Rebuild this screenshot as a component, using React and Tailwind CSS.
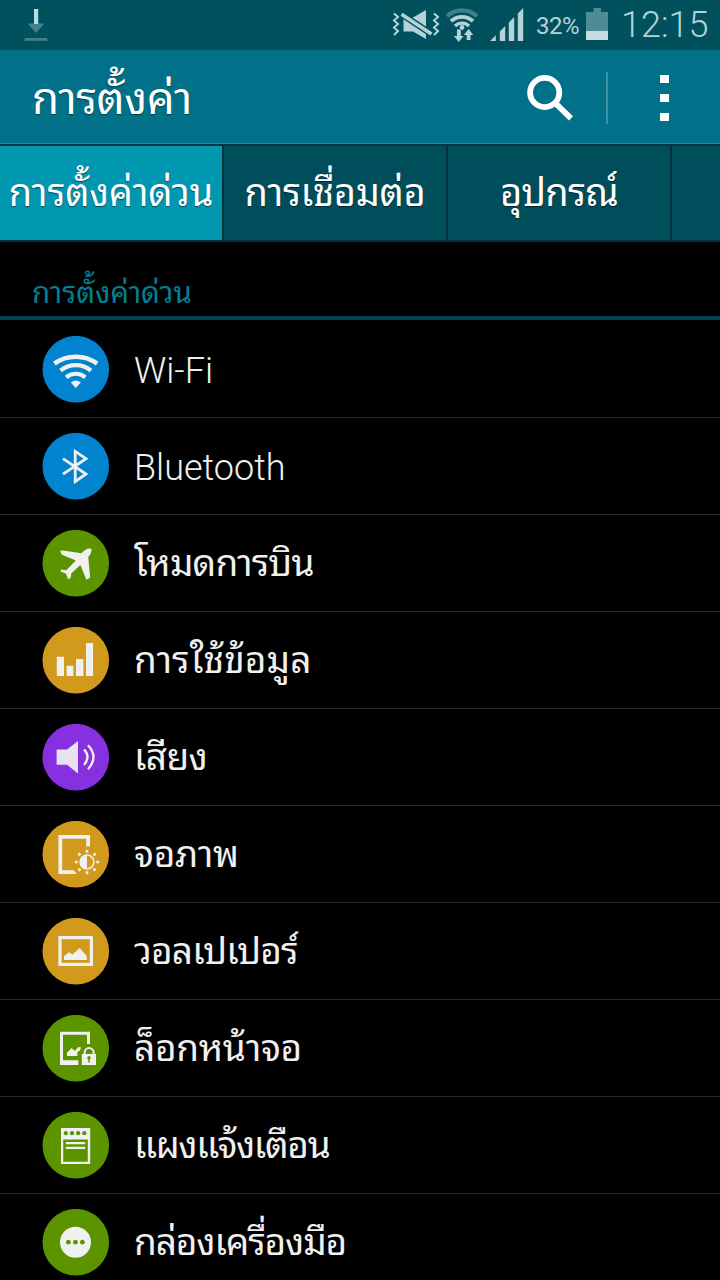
const FG = '#f0f0f0'

const BLUE = '#0283d0'
const GREEN = '#5c9400'
const AMBER = '#d19a1c'
const PURPLE = '#8630e0'

function WifiGlyph() {
  return (
    <g fill="none" stroke={FG}>
      <path d="M12.4 27.7A36.5 36.5 0 0 1 55.2 27.7" strokeWidth="4.6" />
      <path d="M18.6 34.6A24 24 0 0 1 49 34.6" strokeWidth="4.4" />
      <path d="M24.2 41.3A14.6 14.6 0 0 1 43.3 41.3" strokeWidth="4.2" />
      <path d="M28.8 46.4A8 8 0 0 1 38.8 46.4L33.8 52Z" fill={FG} stroke="none" />
    </g>
  )
}

function BluetoothGlyph() {
  return (
    <path
      d="M21 25.6L44 41L33.2 48.6V18.4L44 25.7L21 41.2"
      fill="none"
      stroke={FG}
      strokeWidth="2.8"
    />
  )
}

function PlaneGlyph() {
  return (
    <path
      d="M49.3 18.8Q50.4 22.4 46.2 27L48.2 47.6L44.4 49.8L38.4 35L29.2 43.6L28.8 47.6L26.2 49.4L24 43.8L18.8 41.6L18.8 39.4L24.4 40.2L33.8 30.4L20 24.8L18 20.8L21 20.4L39.4 23.2Q45.2 17 49.3 18.8Z"
      fill={FG}
    />
  )
}

function DataGlyph() {
  return (
    <g fill={FG}>
      <path d="M14.8 29.7h7.2V49h-7.2zM24.6 38.7h6.8V49h-6.8zM34 32h7.4v17H34zM44 16h7.1v33H44z" />
    </g>
  )
}

function SoundGlyph() {
  return (
    <g fill={FG} fillOpacity="0.93">
      <path d="M14.6 25.6h10.4L36 17v32.4L25 40.7H14.6z" />
      <path
        d="M42 25.4Q49 33 42 41M46 21.2Q57 33 46 45.2"
        fill="none"
        stroke={FG}
        strokeWidth="2.3"
      />
    </g>
  )
}

function DisplayGlyph() {
  const rays = [0, 45, 90, 135, 180, 225, 270, 315]
  return (
    <g fill={FG}>
      <path d="M16.4 14H48v11.6h-3.8v-7.9H20.2v31.6h11.5l3 3.7H16.4z" />
      <circle cx="45" cy="41" r="6.9" fill="none" stroke={FG} strokeWidth="1.5" />
      <path d="M45 34.2a6.8 6.8 0 0 0 0 13.6z" />
      {rays.map(a => (
        <rect key={a} x="43.7" y="28.9" width="2.6" height="2.8" transform={`rotate(${a} 45 41)`} />
      ))}
    </g>
  )
}

function WallpaperGlyph() {
  return (
    <g fill={FG}>
      <rect x="18" y="19.6" width="31.4" height="26.8" fill="none" stroke={FG} strokeWidth="3.2" />
      <path d="M22 42V38.6L26.8 34.2L30.4 36.4L37.7 30L44.8 38V42Z" />
    </g>
  )
}

function LockScreenGlyph() {
  return (
    <g fill={FG}>
      <path d="M18 16.7h30V29h-3V19.8H21v25.5h15.3V50H18z" />
      <path d="M25 41V37.8L29.6 33L32.6 36L36.4 32L39 32.6L38 35.4L35.4 37V41Z" />
      <path d="M42.6 39.5V37.6a4.5 4.5 0 0 1 9 0V39.5" fill="none" stroke={FG} strokeWidth="2" />
      <rect x="39.8" y="39" width="14.2" height="11" />
      <circle cx="47" cy="42.8" r="1.7" fill={GREEN} />
      <rect x="46.3" y="43" width="1.5" height="4.6" fill={GREEN} />
    </g>
  )
}

function PanelGlyph() {
  return (
    <g fill={FG}>
      <path fillRule="evenodd" d="M19 16h29.2v36H19zM21.2 27.4v22.4h24.6V27.4z" />
      {[23.8, 30, 36.1, 42.3].map(x => (
        <circle key={x} cx={x} cy="21.2" r="2.1" fill={GREEN} />
      ))}
      <path d="M23.8 30h19.4v2.2H23.8zM23.8 34.7h19.4v2.2H23.8z" />
    </g>
  )
}

function ToolboxGlyph() {
  return (
    <g>
      <circle cx="33.5" cy="33.2" r="15.5" fill={FG} />
      {[26.4, 33.4, 40.4].map(x => (
        <circle key={x} cx={x} cy="33.2" r="2.4" fill={GREEN} />
      ))}
    </g>
  )
}

const items = [
  { label: 'Wi-Fi', color: BLUE, Glyph: WifiGlyph, latin: true },
  { label: 'Bluetooth', color: BLUE, Glyph: BluetoothGlyph, latin: true },
  { label: 'โหมดการบิน', color: GREEN, Glyph: PlaneGlyph, tracking: 'tracking-[-0.8px]' },
  { label: 'การใช้ข้อมูล', color: AMBER, Glyph: DataGlyph, tracking: 'tracking-[0.1px]' },
  { label: 'เสียง', color: PURPLE, Glyph: SoundGlyph, tracking: 'tracking-[-0.6px]' },
  { label: 'จอภาพ', color: AMBER, Glyph: DisplayGlyph, tracking: 'tracking-[-0.2px]' },
  { label: 'วอลเปเปอร์', color: AMBER, Glyph: WallpaperGlyph, tracking: 'tracking-[-0.8px]' },
  { label: 'ล็อกหน้าจอ', color: GREEN, Glyph: LockScreenGlyph, tracking: 'tracking-[-0.3px]' },
  { label: 'แผงแจ้งเตือน', color: GREEN, Glyph: PanelGlyph, tracking: 'tracking-[-1.3px]' },
  { label: 'กล่องเครื่องมือ', color: GREEN, Glyph: ToolboxGlyph, tracking: 'tracking-[-1.1px]' },
]

function StatusBar() {
  return (
    <div className="h-[50px] bg-[#00505d] flex items-center justify-between text-[#b4d3d8]">
      <svg width="60" height="50" viewBox="0 0 60 50">
        <path d="M27.5 23.5h17L36 33z" fill="#3f808b" />
        <rect x="34" y="9" width="4.2" height="15" fill="#b9dce0" />
        <rect x="24.6" y="38" width="22.8" height="2.8" fill="#3f808b" />
      </svg>

      <div className="flex items-center h-full">
        {/* vibrate, wifi and signal */}
        <svg width="146" height="50" viewBox="386 0 146 50" fill="#b4d3d8">
          <path
            d="M394 13.5l4 3.5-4 3.5 4 3.5-4 3.5 4 3.5-4 4M434 13.5l4 3.5-4 3.5 4 3.5-4 3.5 4 3.5-4 4"
            fill="none"
            stroke="#b4d3d8"
            strokeWidth="2"
          />
          <path d="M403.5 17.5h9.5l13-7.5v29l-13-7.5h-9.5z" />
          <path d="M401.5 14.2l30 19.8" stroke="#00505d" strokeWidth="6.4" />
          <path d="M401.5 14.2l30 19.8" stroke="#b4d3d8" strokeWidth="3.6" />
          <g fill="none">
            <path d="M447 16.2A22 22 0 0 1 477 16.2" stroke="#3f808b" strokeWidth="4.2" />
            <path d="M451 21.2A16 16 0 0 1 473 21.2" stroke="#b4d3d8" strokeWidth="3.8" />
            <path d="M455 26A10 10 0 0 1 469 26" stroke="#b4d3d8" strokeWidth="3.4" />
          </g>
          <circle cx="462" cy="27.5" r="2.4" />
          <path d="M457 29.5h3.8v6.5h2.8l-4.9 6-4.7-6h3zM466.7 40h3.8v-5h2.8l-4.7-6-4.7 6h2.8z" />
          <path d="M490 41l5.8-5.8V41zM499.8 31.5l5.4-5.4V41h-5.4zM508.8 22.5l5.4-5.4V41h-5.4zM517.8 13.5l5.4-5.4V41h-5.4z" />
        </svg>
        <span className="w-[49px] pl-1 text-[24px] leading-none tracking-[-0.5px] font-['Roboto'] whitespace-nowrap pt-0.5">
          32%
        </span>
        <svg width="38" height="50" viewBox="581 0 38 50">
          <path d="M586 12h7.5V8h7.5v4h7v19h-22z" fill="#4f8b95" />
          <rect x="586" y="31" width="22" height="9" fill="#c4dde0" />
        </svg>
        <span className="w-[101px] pl-0.5 text-[36px] leading-none font-light font-['Roboto'] whitespace-nowrap">
          12:15
        </span>
      </div>
    </div>
  )
}

function ActionBar() {
  return (
    <header className="h-[96px] bg-[#007189] border-b-2 border-[#003642] flex items-center justify-between shadow-[inset_0_-1px_0_#248ca1]">
      <h1 className="pl-8 pb-[7px] text-[44px] leading-none tracking-[-0.4px] text-white [text-shadow:0_1px_1px_rgba(0,0,0,0.5)]">
        การตั้งค่า
      </h1>
      <svg width="210" height="94" viewBox="510 50 210 94">
        <circle cx="544.7" cy="92.5" r="14.6" fill="none" stroke="#fff" strokeWidth="5.8" />
        <path d="M555.5 103.2L571 118.4" stroke="#fff" strokeWidth="5.8" />
        <rect x="606" y="72" width="2" height="52" fill="#3d93a4" />
        <path d="M660 75h9v8h-9zM660 94h9v8h-9zM660 113h9v8h-9z" fill="#fff" />
      </svg>
    </header>
  )
}

function Tabs() {
  return (
    <nav className="h-[96px] flex border-b-2 border-[#002f37] bg-[#004e5b] text-[38px] leading-none text-white [text-shadow:0_1px_1px_rgba(0,0,0,0.5)]">
      <div className="w-[224px] shrink-0 bg-[#0097b0] border-r-2 border-[#00323c] pb-2 flex items-center justify-center whitespace-nowrap tracking-[-0.15px]">
        การตั้งค่าด่วน
      </div>
      <div className="w-[224px] shrink-0 border-r-2 border-[#00323c] pb-2 flex items-center justify-center whitespace-nowrap tracking-[-0.3px]">
        การเชื่อมต่อ
      </div>
      <div className="w-[224px] shrink-0 border-r-2 border-[#00323c] pb-2 flex items-center justify-center whitespace-nowrap tracking-[-0.7px]">
        อุปกรณ์
      </div>
    </nav>
  )
}

function Row({ label, color, Glyph, latin, tracking }) {
  return (
    <li className="h-[97px] shrink-0 border-b border-[#2b2b2b] flex items-center pl-[42px] pt-0.5">
      <svg width="68" height="68" viewBox="0 0 68 68" className="shrink-0">
        <circle cx="33.8" cy="33.2" r="33.3" fill={color} />
        <Glyph />
      </svg>
      <span
        className={
          latin
            ? "pl-6 pt-0.5 text-[36px] leading-none font-light font-['Roboto']"
            : `pl-6 pb-[9px] text-[37px] leading-none whitespace-nowrap ${tracking}`
        }
      >
        {label}
      </span>
    </li>
  )
}

export default function App() {
  return (
    <div className="w-[720px] h-[1280px] overflow-hidden bg-black text-[#f0f0f0] font-['Noto_Sans_Thai_Looped','Noto_Sans',sans-serif]">
      <StatusBar />
      <ActionBar />
      <Tabs />
      <h2 className="h-[78px] border-b-4 border-[#004450] pl-8 pt-[33px] text-[29.5px] leading-[30px] text-[#007f93]">
        การตั้งค่าด่วน
      </h2>
      <ul className="pt-px">
        {items.map(item => (
          <Row key={item.label} {...item} />
        ))}
      </ul>
    </div>
  )
}
